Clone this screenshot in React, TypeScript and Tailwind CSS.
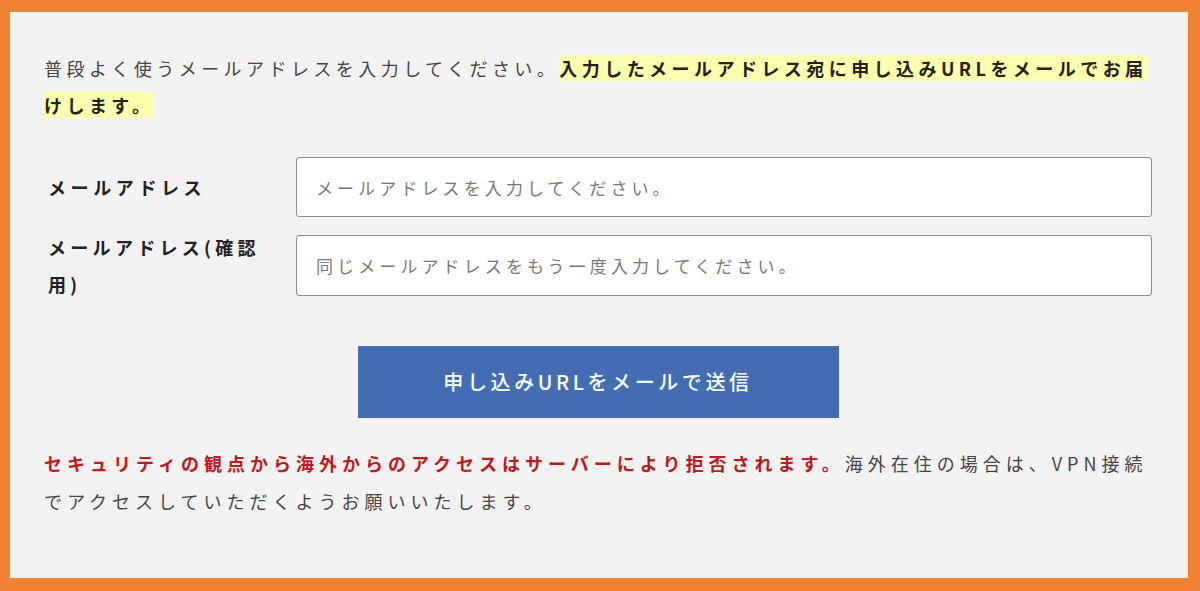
import { useState } from 'react';

export default function App() {
  const [email, setEmail] = useState('');
  const [confirm, setConfirm] = useState('');

  return (
    <div className="h-[591px] w-[1200px] bg-[#f08232] pt-[12px] pl-[10px] pr-[12px] pb-[13px] font-['Noto_Sans_CJK_JP','Noto_Sans',sans-serif]">
      <div className="h-full bg-[#f3f2f3] pt-[38px] pl-[34px] pr-[36px]">
        <p className="-mr-[3px] text-[18px] leading-[37px] tracking-[4.45px] text-[#444]">
          普段よく使うメールアドレスを入力してください。<span className="bg-[#ffffae] font-bold text-[#222]">入力したメールアドレス宛に申し込みURLをメールでお届けします。</span>
        </p>

        <div className="mt-[33px] flex flex-col gap-[18px] pl-[4px]">
          <div className="flex h-[60px] items-center">
            <label className="w-[248px] shrink-0 pr-[26px] text-[18px] leading-[37px] font-bold tracking-[4.6px] text-[#222]">
              メールアドレス
            </label>
            <input
              type="email"
              value={email}
              onChange={(e) => setEmail(e.target.value)}
              placeholder="メールアドレスを入力してください。"
              className="h-[60px] flex-1 rounded-[3px] border border-[#8c8c8c] bg-white px-[19px] text-[17px] tracking-[4.1px] text-[#333] placeholder:text-[#777] outline-none"
            />
          </div>
          <div className="flex h-[61px] items-center">
            <label className="w-[248px] shrink-0 pr-[22px] text-[18px] leading-[37px] font-bold tracking-[4.3px] text-[#222]">
              メールアドレス(確認用)
            </label>
            <input
              type="email"
              value={confirm}
              onChange={(e) => setConfirm(e.target.value)}
              placeholder="同じメールアドレスをもう一度入力してください。"
              className="h-[61px] flex-1 rounded-[3px] border border-[#8c8c8c] bg-white px-[19px] text-[17px] tracking-[4.1px] text-[#333] placeholder:text-[#777] outline-none"
            />
          </div>
        </div>

        <div className="mt-[50px] flex justify-center">
          <button className="h-[72px] w-[481px] bg-[#436db2] text-[20px] font-medium tracking-[3.6px] text-white">
            申し込みURLをメールで送信
          </button>
        </div>

        <p className="mt-[26px] text-[18px] leading-[38px] tracking-[5px] text-[#444]">
          <span className="font-bold text-[#c4161c]">セキュリティの観点から海外からのアクセスはサーバーにより拒否されます。</span>
          海外在住の場合は、VPN接続でアクセスしていただくようお願いいたします。
        </p>
      </div>
    </div>
  );
}
